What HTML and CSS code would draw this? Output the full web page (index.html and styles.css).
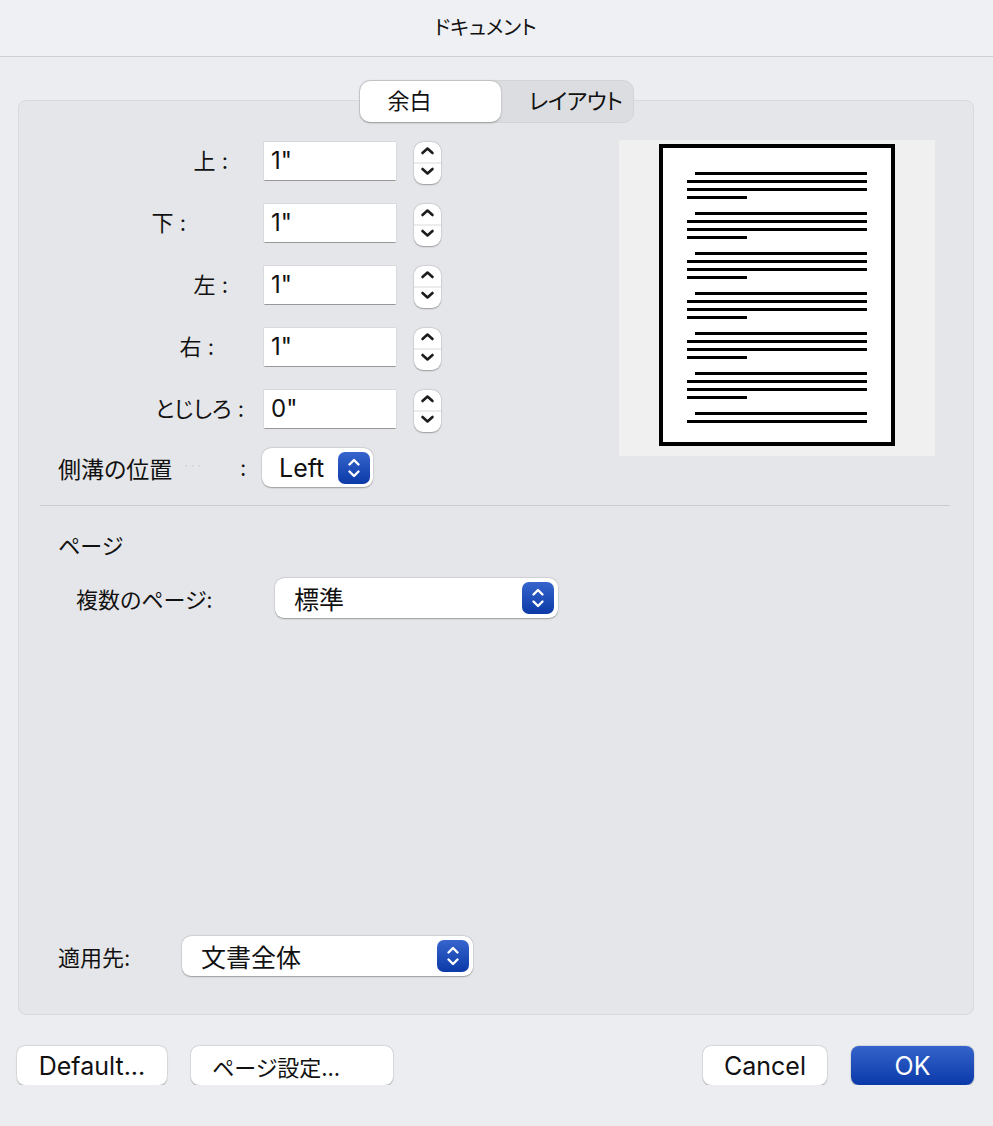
FILE: index.html
```html
<!DOCTYPE html>
<html lang="ja">
<head>
<meta charset="UTF-8">
<meta name="viewport" content="width=device-width, initial-scale=1.0">
<title>ドキュメント</title>
<link rel="stylesheet" href="styles.css">
</head>
<body>
<div class="titlebar">ドキュメント</div>

<div class="main">
  <div class="tabs">
    <span class="tab tab-active">余白</span>
    <span class="tab">レイアウト</span>
  </div>

  <div class="sheet">
    <div class="top">
      <div class="margins">
        <div class="field">
          <span class="field-label pad-top">上 :</span>
          <div class="textbox">1"</div>
          <span class="stepper"><svg width="27" height="42" viewBox="0 0 27 42"><path d="M8.5 11 L13.5 6.5 L18.5 11" /><line class="mid" x1="0" y1="21" x2="27" y2="21" /><path d="M8.5 27 L13.5 31.5 L18.5 27" /></svg></span>
        </div>
        <div class="field">
          <span class="field-label pad-bottom">下 :</span>
          <div class="textbox">1"</div>
          <span class="stepper"><svg width="27" height="42" viewBox="0 0 27 42"><path d="M8.5 11 L13.5 6.5 L18.5 11" /><line class="mid" x1="0" y1="21" x2="27" y2="21" /><path d="M8.5 27 L13.5 31.5 L18.5 27" /></svg></span>
        </div>
        <div class="field">
          <span class="field-label pad-top">左 :</span>
          <div class="textbox">1"</div>
          <span class="stepper"><svg width="27" height="42" viewBox="0 0 27 42"><path d="M8.5 11 L13.5 6.5 L18.5 11" /><line class="mid" x1="0" y1="21" x2="27" y2="21" /><path d="M8.5 27 L13.5 31.5 L18.5 27" /></svg></span>
        </div>
        <div class="field">
          <span class="field-label pad-right">右 :</span>
          <div class="textbox">1"</div>
          <span class="stepper"><svg width="27" height="42" viewBox="0 0 27 42"><path d="M8.5 11 L13.5 6.5 L18.5 11" /><line class="mid" x1="0" y1="21" x2="27" y2="21" /><path d="M8.5 27 L13.5 31.5 L18.5 27" /></svg></span>
        </div>
        <div class="field">
          <span class="field-label">とじしろ :</span>
          <div class="textbox">0"</div>
          <span class="stepper"><svg width="27" height="42" viewBox="0 0 27 42"><path d="M8.5 11 L13.5 6.5 L18.5 11" /><line class="mid" x1="0" y1="21" x2="27" y2="21" /><path d="M8.5 27 L13.5 31.5 L18.5 27" /></svg></span>
        </div>

        <div class="gutter-row">
          <span class="gutter-label">側溝の位置<span class="ghost">· · ·</span></span>
          <span class="colon">:</span>
          <div class="popup popup-gutter">
            <span class="popup-text">Left</span>
            <span class="popup-btn"><svg width="32" height="32" viewBox="0 0 32 32"><path d="M11.5 12.5 L16 8 L20.5 12.5" /><path d="M11.5 19.5 L16 24 L20.5 19.5" /></svg></span>
          </div>
        </div>
      </div>

      <div class="preview">
        <svg width="316" height="316" viewBox="0 0 316 316">
          <rect x="42" y="6" width="232" height="298" fill="#fff" stroke="#000" stroke-width="4" />
          <g fill="#000">
            <rect x="76" y="32" width="172" height="3" /><rect x="68" y="40" width="180" height="3" /><rect x="68" y="48" width="180" height="3" /><rect x="68" y="56" width="60" height="3" />
            <rect x="76" y="72" width="172" height="3" /><rect x="68" y="80" width="180" height="3" /><rect x="68" y="88" width="180" height="3" /><rect x="68" y="96" width="60" height="3" />
            <rect x="76" y="112" width="172" height="3" /><rect x="68" y="120" width="180" height="3" /><rect x="68" y="128" width="180" height="3" /><rect x="68" y="136" width="60" height="3" />
            <rect x="76" y="152" width="172" height="3" /><rect x="68" y="160" width="180" height="3" /><rect x="68" y="168" width="180" height="3" /><rect x="68" y="176" width="60" height="3" />
            <rect x="76" y="192" width="172" height="3" /><rect x="68" y="200" width="180" height="3" /><rect x="68" y="208" width="180" height="3" /><rect x="68" y="216" width="60" height="3" />
            <rect x="76" y="232" width="172" height="3" /><rect x="68" y="240" width="180" height="3" /><rect x="68" y="248" width="180" height="3" /><rect x="68" y="256" width="60" height="3" />
            <rect x="76" y="272" width="172" height="3" /><rect x="68" y="280" width="180" height="3" />
          </g>
        </svg>
      </div>
    </div>

    <hr class="divider">

    <div class="section-title">ページ</div>
    <div class="pages-row">
      <span class="pages-label">複数のページ:</span>
      <div class="popup popup-pages">
        <span class="popup-text">標準</span>
        <span class="popup-btn"><svg width="32" height="32" viewBox="0 0 32 32"><path d="M11.5 12.5 L16 8 L20.5 12.5" /><path d="M11.5 19.5 L16 24 L20.5 19.5" /></svg></span>
      </div>
    </div>

    <div class="apply-row">
      <span class="apply-label">適用先:</span>
      <div class="popup popup-apply">
        <span class="popup-text">文書全体</span>
        <span class="popup-btn"><svg width="32" height="32" viewBox="0 0 32 32"><path d="M11.5 12.5 L16 8 L20.5 12.5" /><path d="M11.5 19.5 L16 24 L20.5 19.5" /></svg></span>
      </div>
    </div>
  </div>

  <div class="buttons">
    <button type="button" class="btn btn-default">Default...</button>
    <button type="button" class="btn btn-page">ページ設定...</button>
    <span class="spacer"></span>
    <button type="button" class="btn btn-cancel">Cancel</button>
    <button type="button" class="btn btn-ok">OK</button>
  </div>
</div>
</body>
</html>
```

FILE: styles.css
```css
body {
  margin: 0;
  padding: 0;
  background-color: #ecedf0;
  font-family: Inter, "Noto Sans CJK JP", sans-serif;
  font-feature-settings: "palt";
  color: #111;
  font-size: 22px;
}

.titlebar {
  height: 56px;
  line-height: 56px;
  padding-right: 22px;
  text-align: center;
  font-size: 20px;
  background-color: #eef0f3;
  border-bottom: 1px solid #cfd0d3;
}

.main {
  padding: 23px 19px 0 18px;
}

.tabs {
  position: relative;
  z-index: 1;
  display: flex;
  width: 273px;
  height: 41px;
  margin: 0 auto;
  background-color: #dcdde0;
  border: 1px solid #d3d4d7;
  border-radius: 11px;
}

.tab {
  display: block;
  width: 132px;
  height: 41px;
  line-height: 40px;
  padding-left: 28px;
  box-sizing: border-box;
  font-size: 22px;
  letter-spacing: -0.5px;
}

.tab-active {
  width: 142px;
  background-color: #fff;
  border-radius: 10px;
  box-shadow: 0 0.5px 2px rgba(0, 0, 0, 0.3);
  letter-spacing: 0;
}

.sheet {
  display: flex;
  flex-direction: column;
  height: 915px;
  margin-top: -23px;
  padding-bottom: 38px;
  box-sizing: border-box;
  background-color: #e5e6e9;
  border: 1px solid #d8d9dc;
  border-radius: 8px;
}

.top {
  display: flex;
  padding-top: 39px;
}

.margins {
  flex: 1;
  padding-top: 2px;
}

.field {
  display: flex;
  align-items: flex-start;
  height: 42px;
  margin-bottom: 20px;
}

.field-label {
  width: 225px;
  margin-right: 20px;
  line-height: 38px;
  text-align: right;
  box-sizing: border-box;
}

.pad-top { padding-right: 16px; }
.pad-bottom { padding-right: 58px; }
.pad-right { padding-right: 30px; }

.textbox {
  width: 132px;
  height: 38px;
  line-height: 38px;
  padding-left: 7px;
  box-sizing: border-box;
  background-color: #fff;
  font-size: 24px;
  box-shadow: 0 0 0 0.5px rgba(0, 0, 0, 0.1), 0 1.5px 0 -0.5px rgba(0, 0, 0, 0.3);
}

.stepper {
  display: block;
  width: 27px;
  height: 42px;
  margin-left: 18px;
  background-color: #fff;
  border-radius: 9px;
  box-shadow: 0 0.5px 1.5px rgba(0, 0, 0, 0.3), 0 0 0 0.5px rgba(0, 0, 0, 0.06);
}

.stepper svg {
  display: block;
}

.stepper path {
  fill: none;
  stroke: #1c1c1c;
  stroke-width: 2.6;
  stroke-linecap: round;
  stroke-linejoin: round;
}

.stepper .mid {
  stroke: #dadada;
  stroke-width: 1;
}

.gutter-row {
  display: flex;
  align-items: center;
  margin-top: -4px;
  padding-left: 39px;
}

.gutter-label {
  width: 182px;
  font-size: 23px;
}

.ghost {
  margin-left: 12px;
  font-size: 12px;
  vertical-align: 8px;
  color: #c9cacd;
}

.colon {
  width: 22px;
}

.popup {
  display: flex;
  align-items: center;
  justify-content: space-between;
  box-sizing: border-box;
  background-color: #fff;
  border-radius: 9px;
  box-shadow: 0 0.5px 1.5px rgba(0, 0, 0, 0.3), 0 0 0 0.5px rgba(0, 0, 0, 0.06);
}

.popup-text {
  padding-left: 17px;
}

.popup-btn {
  display: block;
  width: 32px;
  height: 32px;
  border-radius: 7px;
  background: linear-gradient(#3765cd, #0b3aa7);
}

.popup-btn svg {
  display: block;
}

.popup-btn path {
  fill: none;
  stroke: #fff;
  stroke-width: 2.4;
  stroke-linecap: round;
  stroke-linejoin: round;
}

.popup-gutter {
  width: 111px;
  height: 39px;
  padding-right: 3px;
  font-size: 25px;
}

.preview {
  width: 316px;
  height: 316px;
  margin-right: 38px;
  background-color: #f0f0f0;
}

.preview svg {
  display: block;
}

.divider {
  height: 1px;
  margin: 18px 23px 0 21px;
  border: 0;
  background-color: #cacbce;
}

.section-title {
  margin-top: 24px;
  padding-left: 39px;
  line-height: 32px;
}

.pages-row {
  display: flex;
  align-items: center;
  margin-top: 16px;
  padding-left: 57px;
}

.pages-label {
  width: 199px;
}

.popup-pages {
  width: 283px;
  height: 40px;
  padding-right: 4px;
}

.apply-row {
  display: flex;
  align-items: center;
  margin-top: auto;
  padding-left: 39px;
}

.apply-label {
  width: 124px;
}

.popup-apply {
  width: 291px;
  height: 40px;
  padding-right: 4px;
}

.popup-pages .popup-text,
.popup-apply .popup-text {
  padding-left: 19px;
  font-size: 25px;
}

.buttons {
  display: flex;
  margin-top: 31px;
  margin-left: -1px;
}

.spacer {
  flex: 1;
}

.btn {
  height: 39px;
  margin-right: 24px;
  padding: 0;
  border: 0;
  border-radius: 8px;
  background-color: #fff;
  color: #111;
  font-family: Inter, "Noto Sans CJK JP", sans-serif;
  font-feature-settings: "palt";
  font-size: 25px;
  box-shadow: 0 0.5px 1.5px rgba(0, 0, 0, 0.3), 0 0 0 0.5px rgba(0, 0, 0, 0.06);
}

.btn-default { width: 150px; }
.btn-page { width: 202px; text-align: left; padding-left: 21px; font-size: 22px; }
.btn-cancel { width: 124px; }

.btn-ok {
  width: 123px;
  margin-right: 0;
  color: #fff;
  background: linear-gradient(#3563cb, #0a3aa9);
}
```
